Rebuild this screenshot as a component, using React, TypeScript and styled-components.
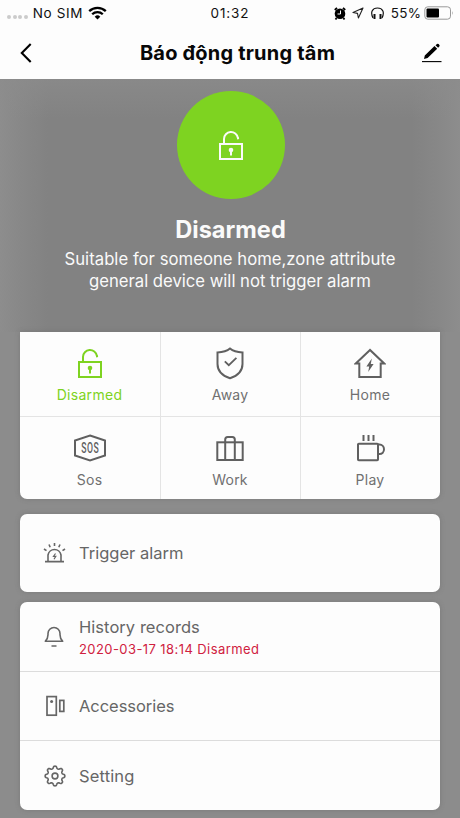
import React from "react";
import styled, { createGlobalStyle, css } from "styled-components";

const GlobalStyle = createGlobalStyle`
  * { box-sizing: border-box; }
  body { margin: 0; background: #8c8c8c; font-family: Inter, "Liberation Sans", sans-serif; }
`;

const Screen = styled.div`
  width: 460px;
  height: 818px;
  overflow: hidden;
  display: flex;
  flex-direction: column;
  background: #8c8c8c;
`;

const StatusBar = styled.div`
  height: 26px;
  flex: none;
  display: grid;
  grid-template-columns: 1fr auto 1fr;
  align-items: center;
  background: #fdfdfd;
  color: #111;
  font-size: 13.5px;
`;

const StatusLeft = styled.div`
  display: flex;
  align-items: center;
  padding-left: 7px;
`;

const StatusRight = styled.div`
  display: flex;
  align-items: center;
  justify-content: flex-end;
  padding-right: 6px;
`;

const StatusIcons = styled.div`
  display: flex;
  align-items: center;
  gap: 6.5px;
`;

const StatusText = styled.span<{ $spacing?: number; $left?: number; $right?: number }>`
  line-height: 16px;
  white-space: nowrap;
  letter-spacing: ${(p) => p.$spacing ?? 0}px;
  margin-left: ${(p) => p.$left ?? 0}px;
  margin-right: ${(p) => p.$right ?? 0}px;
`;

const Dots = styled.div`
  display: flex;
  gap: 1.6px;
  margin-top: 8px;
`;

const Dot = styled.i`
  width: 4px;
  height: 4px;
  border-radius: 50%;
  background: #cbcbcb;
`;

const NavBar = styled.header`
  height: 53px;
  flex: none;
  display: flex;
  align-items: center;
  justify-content: space-between;
  padding: 0 18px 0 20px;
  background: #fdfdfd;
`;

const NavTitle = styled.h1`
  margin: 0 0 0 21px;
  font-size: 20px;
  line-height: 24px;
  font-weight: 700;
  letter-spacing: 0.2px;
  color: #080808;
`;

const Body = styled.main`
  flex: 1;
  padding: 0 20px;
  background: #8c8c8c;
`;

const Hero = styled.section`
  height: 253px;
  margin: 0 -20px;
  display: flex;
  flex-direction: column;
  align-items: center;
  padding: 12px 0 0 1px;
  background:
    linear-gradient(180deg, rgba(140, 140, 140, 0.7), rgba(140, 140, 140, 0) 40px),
    linear-gradient(90deg, #8d8d8d 0, #888 20px, #828282 48px, #828282 412px, #888 440px, #8d8d8d 100%);
  color: #fafafa;
`;

const HeroBadge = styled.div`
  width: 108px;
  height: 108px;
  flex: none;
  border-radius: 50%;
  background: #7ed321;
  display: flex;
  align-items: center;
  justify-content: center;
`;

const HeroTitle = styled.h2`
  margin: 17px 0 0;
  font-size: 23.6px;
  line-height: 28px;
  font-weight: 700;
`;

const HeroText = styled.p<{ $spacing: number }>`
  margin: 0;
  font-size: 16.7px;
  line-height: 22px;
  white-space: nowrap;
  letter-spacing: ${(p) => p.$spacing}px;
`;

const HeroCopy = styled.div`
  margin: 4px 1px 0 0;
  text-align: center;
`;

const Card = styled.section<{ $gap?: number; $flatTop?: boolean }>`
  margin-top: ${(p) => p.$gap ?? 0}px;
  border-radius: ${(p) => (p.$flatTop ? "0 0 7px 7px" : "7px")};
  background: #fdfdfd;
  overflow: hidden;
  box-shadow: 0 0 5px rgba(90, 90, 90, 0.35);
`;

const ModeGrid = styled.div`
  display: grid;
  grid-template-columns: 141px 140px 139px;
  grid-template-rows: 85px 82px;
`;

const Mode = styled.button<{ $active?: boolean }>`
  border: 0 solid #e4e4e4;
  border-width: 0 1px 1px 0;
  padding: 8px 1px 0 0;
  background: none;
  display: flex;
  flex-direction: column;
  align-items: center;
  justify-content: flex-start;
  font-family: inherit;
  color: ${(p) => (p.$active ? "#7ed321" : "#606060")};
  &:nth-child(3n) { border-right-width: 0; }
  &:nth-child(n + 4) { border-bottom-width: 0; }
`;

const ModeIcon = styled.span`
  height: 46px;
  display: flex;
  align-items: center;
  justify-content: center;
  svg { display: block; }
`;

const ModeLabel = styled.span<{ $active?: boolean; $spacing: number }>`
  font-size: 14px;
  line-height: 18px;
  letter-spacing: ${(p) => p.$spacing}px;
  color: ${(p) => (p.$active ? "#7ed321" : "#707070")};
`;

const Row = styled.div<{ $height: number; $divided?: boolean }>`
  height: ${(p) => p.$height}px;
  display: flex;
  align-items: center;
  color: #666;
  ${(p) => p.$divided && css`border-bottom: 1px solid #dcdcdc;`}
`;

const RowIcon = styled.span`
  width: 24px;
  margin: 0 12px 0 23px;
  display: flex;
  svg { display: block; }
`;

const RowText = styled.div`
  display: flex;
  flex-direction: column;
`;

const RowTitle = styled.span<{ $spacing?: number }>`
  font-size: 16.5px;
  line-height: 22px;
  letter-spacing: ${(p) => p.$spacing ?? 0}px;
`;

const RowNote = styled.span`
  font-size: 13px;
  line-height: 18px;
  margin-top: 2px;
  letter-spacing: 0.42px;
  color: #d0213f;
`;

const stroke = { fill: "none", stroke: "currentColor", strokeWidth: 2 };

const LockIcon = () => (
  <svg width="26" height="31" viewBox="0 0 26 31" {...stroke}>
    <rect x="2" y="14" width="22" height="15" />
    <path d="M6 13.5V8.9a7 7 0 0 1 13.9-1.1l.3 1.4" />
    <circle cx="13" cy="20" r="2.3" fill="currentColor" stroke="none" />
    <path d="M13 21v4.6" />
  </svg>
);

const ShieldIcon = () => (
  <svg width="28" height="33" viewBox="0 0 28 33" {...stroke}>
    <path d="M14 1.6C11 4.2 7 5.3 1.5 5.5V17c0 7 5 11.8 12.5 14.3C21.5 28.8 26.5 24 26.5 17V5.5C21 5.3 17 4.2 14 1.6z" />
    <path d="M8.8 14.3l4 3.9 7.6-7.4" strokeWidth="1.8" />
  </svg>
);

const HomeIcon = () => (
  <svg width="32" height="31" viewBox="0 0 32 31" {...stroke}>
    <path d="M16 2L1.8 15.5H5.3V29H26.7V15.5H30.2Z" />
    <path d="M17.8 10.5L12.4 18.5h2.8L14.2 24l5.4-8h-2.8z" fill="currentColor" stroke="none" />
  </svg>
);

const SosIcon = () => (
  <svg width="34" height="28" viewBox="0 0 34 28" {...stroke}>
    <path d="M17 1.5L32 6.5V21.5L17 26.5L2 21.5V6.5Z" />
    <text
      transform="translate(17.3 19) scale(0.62 1)"
      textAnchor="middle"
      letterSpacing="1"
      fontFamily="Roboto, sans-serif"
      fontSize="14"
      fontWeight="500"
      fill="currentColor"
      stroke="none"
    >
      SOS
    </text>
  </svg>
);

const WorkIcon = () => (
  <svg width="28" height="27" viewBox="0 0 28 27" {...stroke}>
    <rect x="1.3" y="7.3" width="25.4" height="17.7" />
    <path d="M9.2 25V4.5a2.500 2.500 0 0 1 2.500-2.500h4.600a2.500 2.500 0 0 1 2.500 2.500V25" />
  </svg>
);

const CupIcon = () => (
  <svg width="30" height="28" viewBox="0 0 30 28" {...stroke}>
    <rect x="3" y="9.8" width="20" height="16.4" rx="0.8" />
    <path d="M23 10.5h1.500a4.500 4.800 0 0 1 0 9.600h-1.500" />
    <path d="M8.500 1v6M13.500 1v6M18.500 1v6" />
  </svg>
);

const AlarmIcon = () => (
  <svg width="24" height="22" viewBox="0 0 24 22" {...stroke} strokeWidth={1.6}>
    <path d="M2 19.6H21M5 19V13a6.600 6.600 0 0 1 13 0v6" />
    <path d="M11.5 1v3M6 2.5l1.2 2.7M17 2.5l-1.2 2.7M1 7l2.500 1.700M22 7l-2.500 1.700" />
    <path d="M12.500 11.500l-2 2.800h2.300l-1.800 2.900" strokeWidth="1.2" />
  </svg>
);

const BellIcon = () => (
  <svg width="22" height="22" viewBox="0 0 22 22" {...stroke} strokeWidth={1.6}>
    <path d="M2.300 15.300c1.600-1.600 2.700-3.700 2.700-6.500V7.500a6 6 0 0 1 12 0v1.300c0 2.800 1.100 4.900 2.700 6.500z" strokeLinejoin="round" />
    <path d="M8.5 20h5" />
  </svg>
);

const AccessoryIcon = () => (
  <svg width="22" height="22" viewBox="0 0 22 22" {...stroke} strokeWidth={1.7}>
    <rect x="4" y="1.6" width="9.3" height="18.6" />
    <rect x="16.8" y="5.4" width="4" height="11" />
    <circle cx="8.6" cy="6.6" r="1.5" fill="currentColor" stroke="none" />
  </svg>
);

const gearPath =
  Array.from({ length: 96 }, (_, i) => {
    const a = (i / 96) * Math.PI * 2;
    const wave = Math.tanh(1.6 * Math.cos(8 * a));
    const r = 8.7 + wave * 1.25;
    return `${i ? "L" : "M"}${(12 + r * Math.cos(a)).toFixed(2)} ${(12 + r * Math.sin(a)).toFixed(2)}`;
  }).join("") + "Z";

const GearIcon = () => (
  <svg width="24" height="24" viewBox="0 0 24 24" {...stroke} strokeWidth={1.6}>
    <path d={gearPath} strokeLinejoin="round" />
    <circle cx="12" cy="12" r="2.9" />
  </svg>
);

const WifiIcon = () => (
  <svg width="19" height="14" viewBox="0 0 19 14" fill="none" stroke="#000" strokeWidth="2.3">
    <path d="M1.2 5.2a12 12 0 0 1 16.600 0M4.200 8.300a7.600 7.600 0 0 1 10.600 0" />
    <path d="M9.500 13.500L6.700 10.700a4 4 0 0 1 5.600 0z" fill="#000" stroke="none" />
  </svg>
);

const ClockIcon = () => (
  <svg width="12" height="13" viewBox="0 0 12 13">
    <circle cx="6" cy="6.8" r="5.3" fill="#000" />
    <path d="M.8 3L3 .9M11.2 3L9 .9M2.500 11l-1 1.500M9.500 11l1 1.500" stroke="#000" strokeWidth="1.8" />
    <path d="M6.500 3.500V7H3.500" stroke="#fff" fill="none" />
  </svg>
);

const LocationIcon = () => (
  <svg width="12" height="12" viewBox="0 0 12 12" fill="none" stroke="#222" strokeWidth="1.1">
    <path d="M11 1L1 5.500l4.500.9.9 4.600z" strokeLinejoin="round" />
  </svg>
);

const HeadphoneIcon = () => (
  <svg width="13" height="13" viewBox="0 0 13 13" fill="none" stroke="#111" strokeWidth="1.2">
    <path d="M2 11C-1 5 1.500 1 6.500 1S14 5 11 11" />
    <path d="M3.500 7v5M9.500 7v5" strokeWidth="2" />
  </svg>
);

const BatteryIcon = () => (
  <svg width="30" height="14" viewBox="0 0 30 14">
    <rect x=".8" y=".8" width="25.7" height="12.4" rx="3" fill="none" stroke="#999" />
    <rect x="2.5" y="2.5" width="12.5" height="9" rx="1" fill="#000" />
    <path d="M28 5v4q1.400-2 0-4" fill="#999" />
  </svg>
);

const BackIcon = () => (
  <svg width="12" height="20" viewBox="0 0 12 20" fill="none" stroke="#000" strokeWidth="2.1">
    <path d="M10.700 1L1.800 10l8.900 9" />
  </svg>
);

const EditIcon = () => (
  <svg width="20" height="20" viewBox="0 0 20 20">
    <path d="M2 16l.8-3.500L12.500 3l2.700 2.700L5.600 15.100zM13.500 2.200L15 .9q.8-.6 1.600.2l.8.9q.6.800-.1 1.500l-1.200 1.300z" fill="#000" />
    <path d="M0 18.600h19.500" stroke="#000" strokeWidth="1.1" />
  </svg>
);

const modes = [
  { label: "Disarmed", icon: <LockIcon />, spacing: 0.3, active: true },
  { label: "Away", icon: <ShieldIcon />, spacing: 0.2 },
  { label: "Home", icon: <HomeIcon />, spacing: 0.3 },
  { label: "Sos", icon: <SosIcon />, spacing: 0.3 },
  { label: "Work", icon: <WorkIcon />, spacing: 0.2 },
  { label: "Play", icon: <CupIcon />, spacing: 0.3 },
];

export default function App() {
  return (
    <Screen>
      <GlobalStyle />
      <StatusBar>
        <StatusLeft>
          <Dots><Dot /><Dot /><Dot /><Dot /></Dots>
          <StatusText $left={5} $right={5.5} $spacing={0.6}>No SIM</StatusText>
          <WifiIcon />
        </StatusLeft>
        <StatusText $spacing={0.9}>01:32</StatusText>
        <StatusRight>
          <StatusIcons>
            <ClockIcon />
            <LocationIcon />
            <HeadphoneIcon />
          </StatusIcons>
          <StatusText $left={7} $right={2.5} $spacing={0.4}>55%</StatusText>
          <BatteryIcon />
        </StatusRight>
      </StatusBar>
      <NavBar>
        <BackIcon />
        <NavTitle>Báo động trung tâm</NavTitle>
        <EditIcon />
      </NavBar>
      <Body>
        <Hero>
          <HeroBadge><LockIcon /></HeroBadge>
          <HeroTitle>Disarmed</HeroTitle>
          <HeroCopy>
            <HeroText $spacing={0.02}>Suitable for someone home,zone attribute</HeroText>
            <HeroText $spacing={-0.02}>general device will not trigger alarm</HeroText>
          </HeroCopy>
        </Hero>
        <Card $flatTop>
          <ModeGrid>
            {modes.map((m) => (
              <Mode key={m.label} $active={m.active}>
                <ModeIcon>{m.icon}</ModeIcon>
                <ModeLabel $active={m.active} $spacing={m.spacing}>{m.label}</ModeLabel>
              </Mode>
            ))}
          </ModeGrid>
        </Card>
        <Card $gap={15}>
          <Row $height={78}>
            <RowIcon><AlarmIcon /></RowIcon>
            <RowTitle>Trigger alarm</RowTitle>
          </Row>
        </Card>
        <Card $gap={10}>
          <Row $height={70} $divided>
            <RowIcon><BellIcon /></RowIcon>
            <RowText>
              <RowTitle $spacing={0.05}>History records</RowTitle>
              <RowNote>2020-03-17 18:14 Disarmed</RowNote>
            </RowText>
          </Row>
          <Row $height={69} $divided>
            <RowIcon><AccessoryIcon /></RowIcon>
            <RowTitle $spacing={-0.05}>Accessories</RowTitle>
          </Row>
          <Row $height={69}>
            <RowIcon><GearIcon /></RowIcon>
            <RowTitle $spacing={0.15}>Setting</RowTitle>
          </Row>
        </Card>
      </Body>
    </Screen>
  );
}
